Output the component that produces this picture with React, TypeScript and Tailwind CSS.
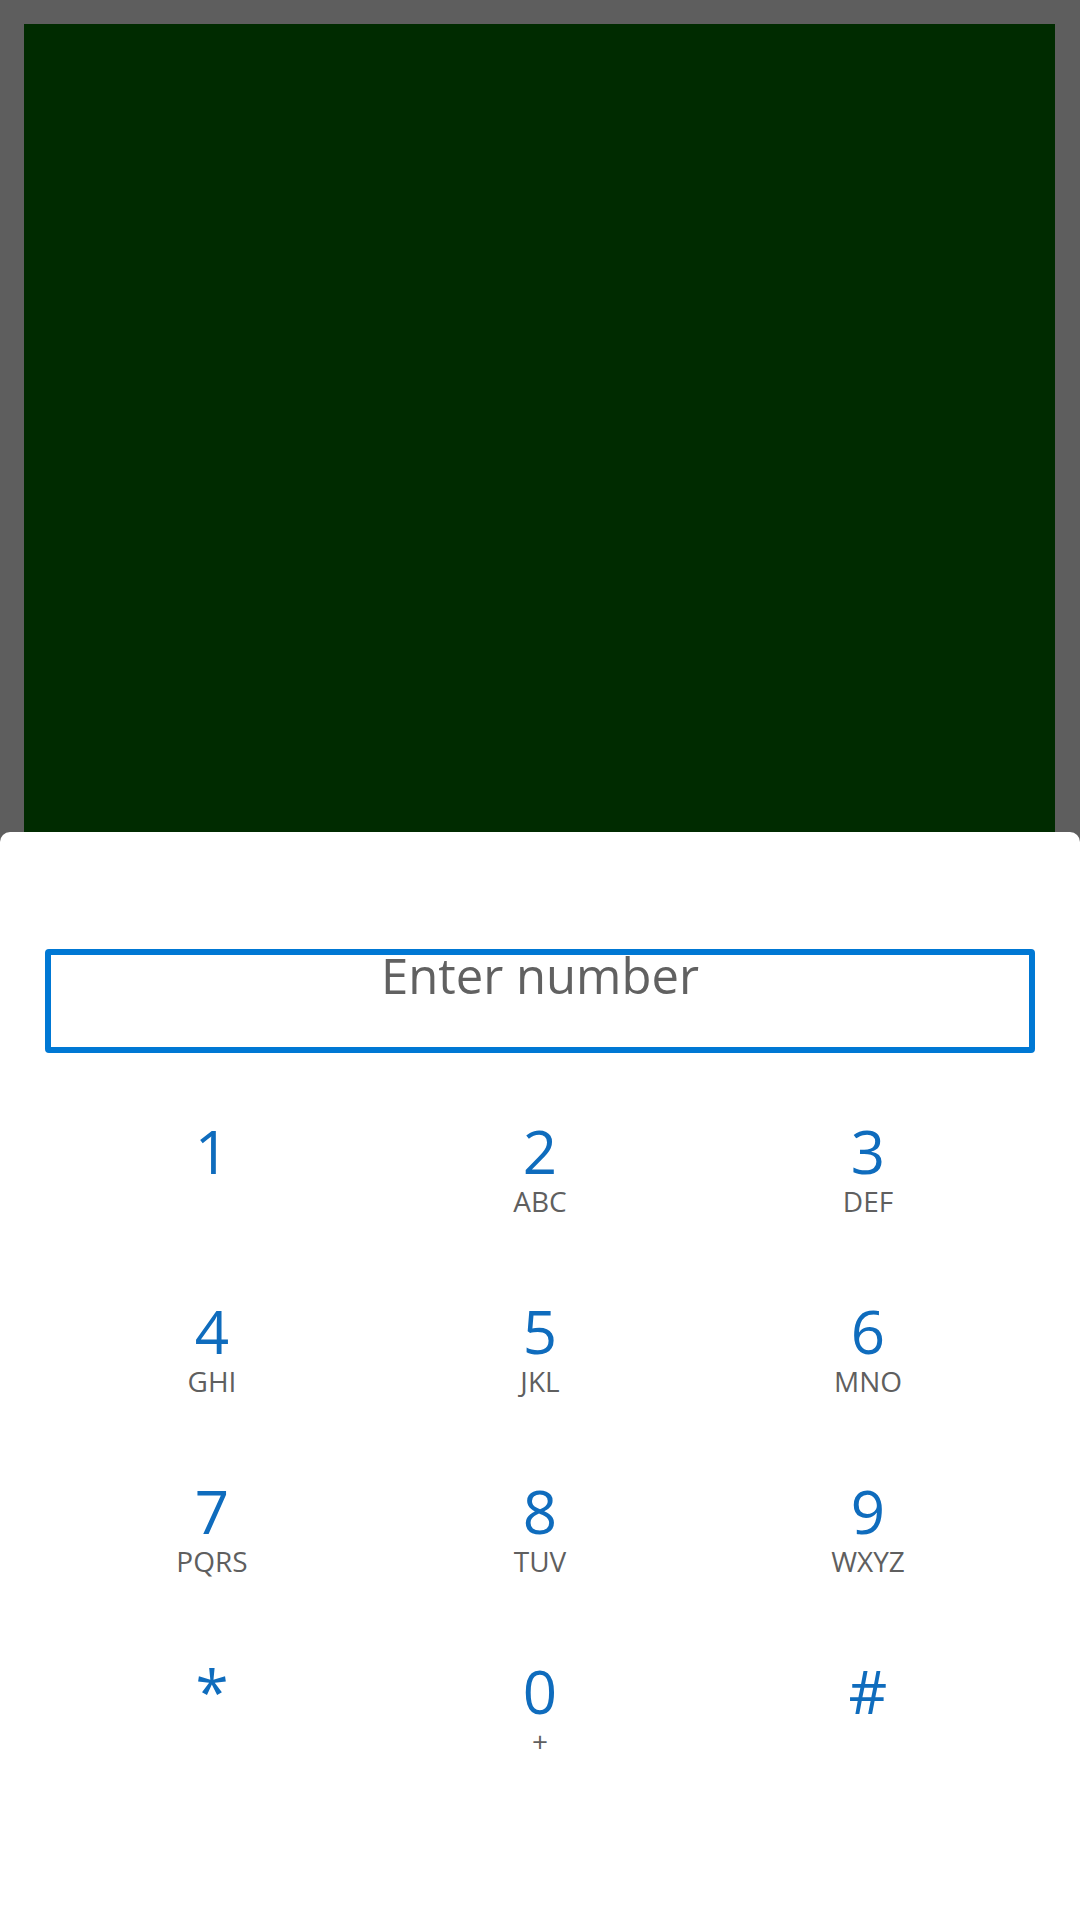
const keys = [
  { digit: "1", letters: "" },
  { digit: "2", letters: "ABC" },
  { digit: "3", letters: "DEF" },
  { digit: "4", letters: "GHI" },
  { digit: "5", letters: "JKL" },
  { digit: "6", letters: "MNO" },
  { digit: "7", letters: "PQRS" },
  { digit: "8", letters: "TUV" },
  { digit: "9", letters: "WXYZ" },
  { digit: "*", letters: "" },
  { digit: "0", letters: "+" },
  { digit: "#", letters: "" },
];

export default function App() {
  return (
    <div
      className="w-[1080px] h-[1920px] flex flex-col bg-[#5e5e5e] overflow-hidden"
      style={{ fontFamily: '"Open Sans", "Noto Sans", sans-serif' }}
    >
      {/* video / preview area */}
      <div className="pl-[24px] pr-[25px] pt-[24px]">
        <div className="h-[808px] bg-[#002b00]" />
      </div>

      {/* dialer sheet */}
      <div className="flex-1 bg-white rounded-t-[10px] pt-[117px]">
        <div className="mx-[45px] h-[104px] border-[6px] border-[#0078d4] rounded-[4px] text-center">
          <div className="text-[49px] leading-[40px] text-[#616161]">Enter number</div>
        </div>

        <div className="mt-[47px] px-[48px] grid grid-cols-3">
          {keys.map((k) => (
            <div key={k.digit} className="h-[180px] pt-[28px] flex flex-col items-center">
              <div className="text-[60px] leading-[46px] text-[#0f6cbd]">{k.digit}</div>
              {k.letters && (
                <div className="mt-[16px] text-[28px] leading-[22px] text-[#5f5f5f]">{k.letters}</div>
              )}
            </div>
          ))}
        </div>
      </div>
    </div>
  );
}
